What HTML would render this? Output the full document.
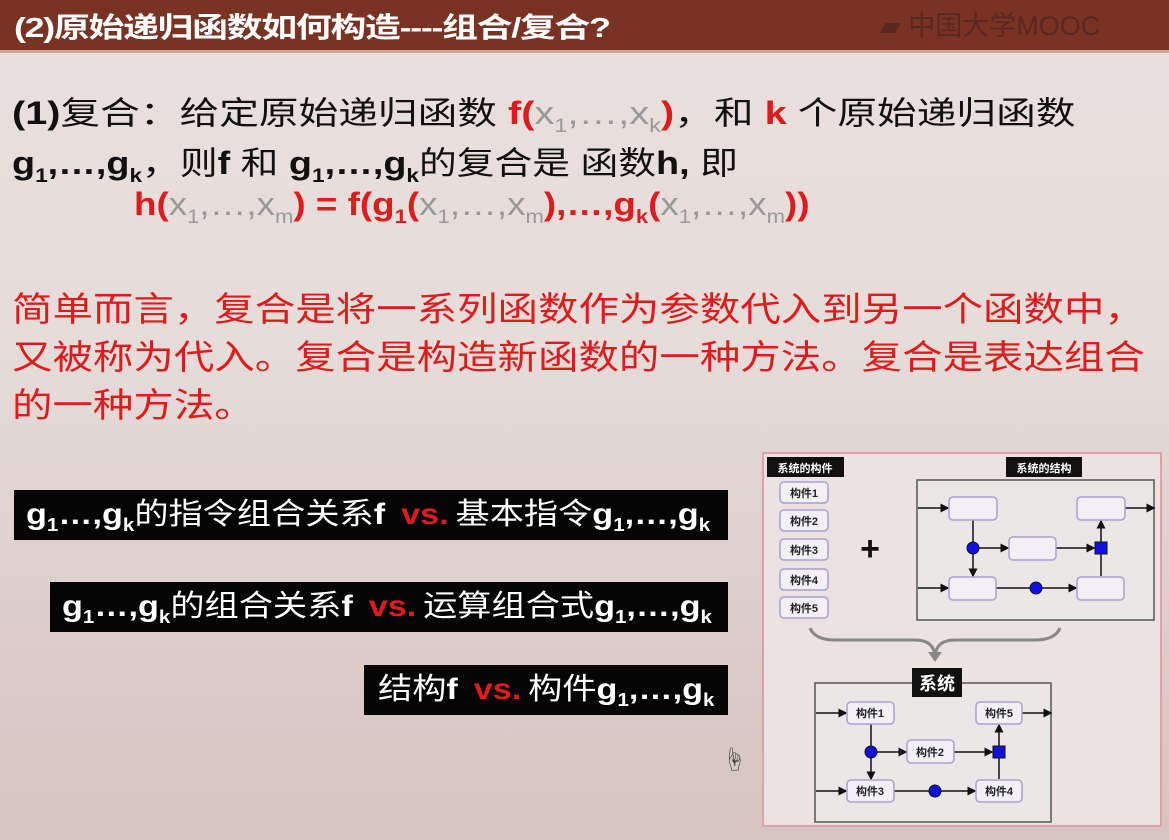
<!DOCTYPE html>
<html><head><meta charset="utf-8"><style>
*{margin:0;padding:0}
body{width:1169px;height:840px;overflow:hidden;position:relative;font-family:"Liberation Sans","Noto Sans CJK SC",sans-serif;
background:linear-gradient(180deg,#e9e1df 0%,#e6dcda 40%,#ddcfcc 70%,#d6c5c1 100%);}
.top{position:absolute;left:0;top:0;width:1169px;height:50px;background:#7a3222;border-bottom:3px solid #c9a69c}
.title{position:absolute;left:14px;top:6px;color:#fff;font-size:28px;font-weight:bold;letter-spacing:-1px;transform:scaleX(1.28);transform-origin:left}
.mooc{position:absolute;left:880px;top:4px;color:#4a2520;font-size:27px;opacity:.75}
.t{position:absolute;font-size:32px;color:#111;white-space:nowrap;transform-origin:left top}
.r{color:#e01b1b}
.g{color:#999;font-weight:normal}
sub{font-size:60%;vertical-align:-8px}
.b{font-weight:bold}
.box{position:absolute;background:#050505;color:#fff;white-space:nowrap;height:50px;line-height:50px;box-sizing:border-box}
.box span.in{display:inline-block;font-size:30px;transform-origin:left center}
.box sub{vertical-align:-7px}
.vs{color:#e01b1b;font-weight:bold;margin:0 6px 0 14px}
</style></head><body>
<div class="top"></div>
<div class="title">(2)原始递归函数如何构造----组合/复合?</div>
<div class="mooc">▰ 中国大学MOOC</div>

<div class="t" style="left:12px;top:88px;transform:scaleX(1.24)"><b>(1)</b>复合：给定原始递归函数 <b class="r">f(</b><span class="g">x<sub>1</sub>,…,x<sub>k</sub></span><b class="r">)</b>，和 <b class="r">k</b> 个原始递归函数</div>
<div class="t" style="left:12px;top:138px;transform:scaleX(1.18)"><b>g<sub>1</sub>,…,g<sub>k</sub></b>，则<b>f</b> 和 <b>g<sub>1</sub>,…,g<sub>k</sub></b>的复合是 函数<b>h,</b> 即</div>
<div class="t b" style="left:134px;top:186px;transform:scaleX(1.15)"><span class="r">h(</span><span class="g">x<sub>1</sub>,…,x<sub>m</sub></span><span class="r">) = f(g<sub>1</sub>(</span><span class="g">x<sub>1</sub>,…,x<sub>m</sub></span><span class="r">),…,g<sub>k</sub>(</span><span class="g">x<sub>1</sub>,…,x<sub>m</sub></span><span class="r">))</span></div>

<div class="t r" style="left:12px;top:286px;font-size:34px;line-height:48px;transform:scaleX(1.19)">简单而言，复合是将一系列函数作为参数代入到另一个函数中，<br>又被称为代入。复合是构造新函数的一种方法。复合是表达组合<br>的一种方法。</div>

<div class="box" style="left:14px;top:490px;width:714px;padding-left:12px"><span class="in" style="transform:scaleX(1.14)"><b>g<sub>1</sub>…,g<sub>k</sub></b>的指令组合关系<b>f</b><span class="vs">vs.</span>基本指令<b>g<sub>1</sub>,…,g<sub>k</sub></b></span></div>
<div class="box" style="left:50px;top:582px;width:678px;padding-left:12px"><span class="in" style="transform:scaleX(1.14)"><b>g<sub>1</sub>…,g<sub>k</sub></b>的组合关系<b>f</b><span class="vs">vs.</span>运算组合式<b>g<sub>1</sub>,…,g<sub>k</sub></b></span></div>
<div class="box" style="left:364px;top:665px;width:364px;padding-left:14px"><span class="in" style="transform:scaleX(1.14)">结构<b>f</b><span class="vs">vs.</span>构件<b>g<sub>1</sub>,…,g<sub>k</sub></b></span></div>
<div style="position:absolute;left:722px;top:740px;font-size:24px;color:#444">☝</div>

<svg style="position:absolute;left:0;top:0" width="1169" height="840" font-family="Liberation Sans,Noto Sans CJK SC,sans-serif">
<defs><marker id="a" markerWidth="6" markerHeight="6" refX="5" refY="3" orient="auto"><path d="M0,0L6,3L0,6z" fill="#111"/></marker></defs>
<rect x="763" y="453" width="398" height="373" fill="#ebe3e2" stroke="#e0a0a8" stroke-width="2"/>
<rect x="767" y="457" width="77" height="20" fill="#111"/><text x="805" y="472" fill="#fff" font-size="11" text-anchor="middle" font-weight="bold">系统的构件</text>
<rect x="1006" y="457" width="76" height="20" fill="#111"/><text x="1044" y="472" fill="#fff" font-size="11" text-anchor="middle" font-weight="bold">系统的结构</text>
<g fill="#f2f0f4" stroke="#a8a0d0" stroke-width="1.5">
<rect x="780" y="482" width="48" height="21" rx="4"/><rect x="780" y="510" width="48" height="21" rx="4"/><rect x="780" y="539" width="48" height="21" rx="4"/><rect x="780" y="569" width="48" height="21" rx="4"/><rect x="780" y="597" width="48" height="21" rx="4"/>
</g>
<g font-size="11" font-weight="bold" fill="#222" text-anchor="middle">
<text x="804" y="497">构件1</text><text x="804" y="525">构件2</text><text x="804" y="554">构件3</text><text x="804" y="584">构件4</text><text x="804" y="612">构件5</text></g>
<text x="870" y="560" font-size="34" font-weight="bold" text-anchor="middle" fill="#111">+</text>
<rect x="917" y="480" width="237" height="140" fill="#ece7e7" stroke="#555" stroke-width="1.5"/>
<g stroke="#111" stroke-width="1.5" fill="none" marker-end="url(#a)">
<line x1="918" y1="508" x2="948" y2="508"/><line x1="1125" y1="508" x2="1154" y2="508"/>
<line x1="973" y1="520" x2="973" y2="576"/><line x1="973" y1="548" x2="1008" y2="548"/><line x1="1056" y1="548" x2="1094" y2="548"/>
<line x1="1101" y1="576" x2="1101" y2="521"/><line x1="918" y1="588" x2="948" y2="588"/><line x1="996" y1="588" x2="1076" y2="588"/>
</g>
<g fill="#f2f0f4" stroke="#a8a0d0" stroke-width="1.5">
<rect x="949" y="497" width="48" height="23" rx="4"/><rect x="1077" y="497" width="48" height="23" rx="4"/><rect x="1009" y="537" width="47" height="23" rx="4"/><rect x="949" y="577" width="47" height="23" rx="4"/><rect x="1077" y="577" width="47" height="23" rx="4"/></g>
<g fill="#1010e0" stroke="#111"><circle cx="973" cy="548" r="6"/><rect x="1095" y="542" width="12" height="12"/><circle cx="1036" cy="588" r="6"/></g>
<path d="M810,628 Q815,640 835,640 L915,640 Q933,640 935,655 Q937,640 955,640 L1035,640 Q1055,640 1060,628" fill="none" stroke="#888" stroke-width="3"/>
<path d="M928,652 L935,662 L942,652z" fill="#888"/>
<rect x="815" y="683" width="236" height="139" fill="#ece7e7" stroke="#555" stroke-width="1.5"/>
<rect x="912" y="668" width="50" height="29" fill="#111"/><text x="937" y="690" fill="#fff" font-size="18" text-anchor="middle" font-weight="bold">系统</text>
<g stroke="#111" stroke-width="1.5" fill="none" marker-end="url(#a)">
<line x1="816" y1="713" x2="846" y2="713"/><line x1="1022" y1="713" x2="1051" y2="713"/>
<line x1="871" y1="724" x2="871" y2="779"/><line x1="871" y1="752" x2="906" y2="752"/><line x1="954" y1="752" x2="992" y2="752"/>
<line x1="999" y1="779" x2="999" y2="725"/><line x1="816" y1="791" x2="846" y2="791"/><line x1="894" y1="791" x2="975" y2="791"/></g>
<g fill="#f2f0f4" stroke="#a8a0d0" stroke-width="1.5">
<rect x="847" y="702" width="47" height="22" rx="4"/><rect x="976" y="702" width="46" height="22" rx="4"/><rect x="907" y="740" width="47" height="23" rx="4"/><rect x="847" y="780" width="47" height="22" rx="4"/><rect x="976" y="780" width="46" height="22" rx="4"/></g>
<g font-size="11" font-weight="bold" fill="#222" text-anchor="middle">
<text x="870" y="717">构件1</text><text x="999" y="717">构件5</text><text x="930" y="756">构件2</text><text x="870" y="795">构件3</text><text x="999" y="795">构件4</text></g>
<g fill="#1010e0" stroke="#111"><circle cx="871" cy="752" r="6"/><rect x="993" y="746" width="12" height="12"/><circle cx="935" cy="791" r="6"/></g>
</svg>
</body></html>
